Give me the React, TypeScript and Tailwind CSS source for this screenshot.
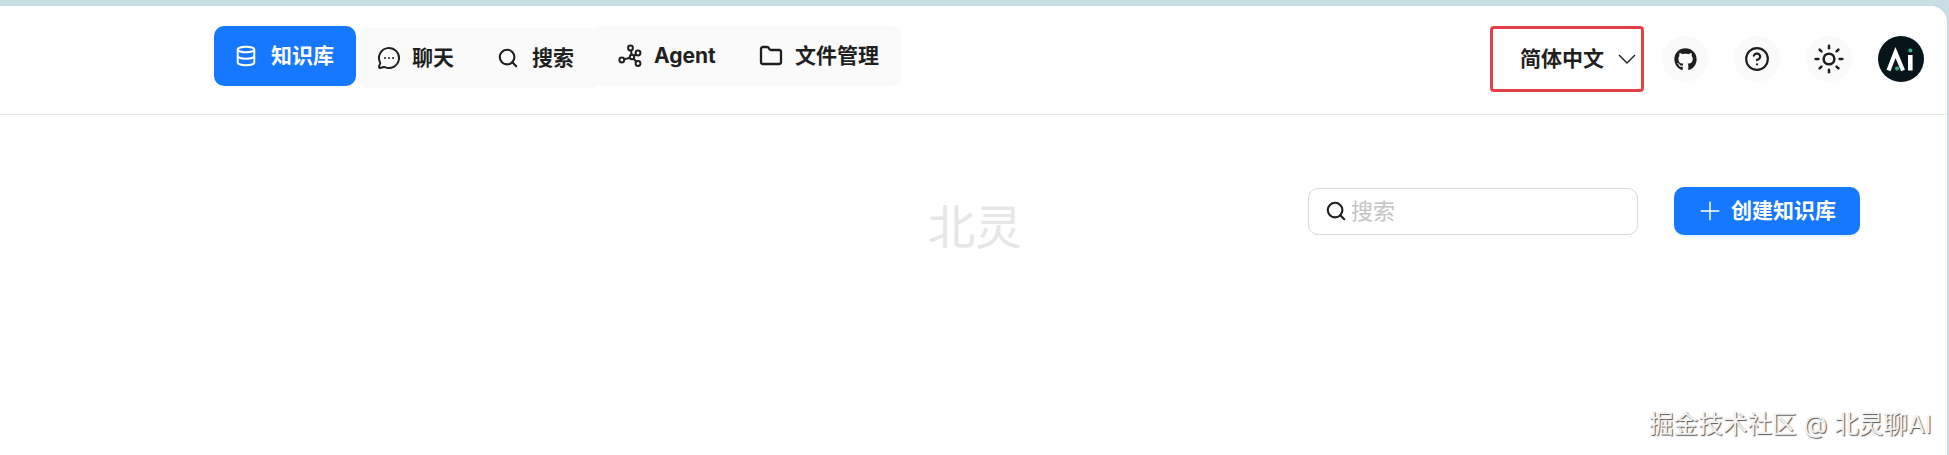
import { Database, Folder, HelpCircle, MessageCircleMore, Plus, Search, Sun } from 'lucide-react';
import { FaGithub } from 'react-icons/fa';
import type { ReactNode } from 'react';

const FONT = "font-['Inter','Noto_Sans_CJK_SC',sans-serif]";

function AgentIcon() {
    return (
        <svg width="24" height="24" viewBox="0 0 24 24" fill="none" stroke="currentColor" strokeWidth="2">
            <circle cx="12.5" cy="4" r="2.4" />
            <circle cx="3.8" cy="16" r="2.4" />
            <circle cx="20" cy="9" r="2.4" />
            <circle cx="20" cy="19.5" r="2.4" />
            <circle cx="14" cy="13" r="2.2" />
            <path d="M13 6.4l.6 4.4M6 15.4l6-1.7M16 12l1.8-1.6M15.6 14.8l2.8 3" />
        </svg>
    );
}

function NavItem({
    icon,
    label,
    active,
    className,
}: {
    icon: ReactNode;
    label: string;
    active?: boolean;
    className?: string;
}) {
    return (
        <div
            className={[
                'flex items-center h-[60px] text-[21px] font-bold',
                active ? 'bg-[#1677ff] text-white rounded-[10px]' : 'bg-[#fafafa] text-[#1f1f1f]',
                className ?? '',
            ].join(' ')}
        >
            {icon}
            <span>{label}</span>
        </div>
    );
}

function RoundIcon({ children }: { children: ReactNode }) {
    return (
        <div className="flex items-center justify-center w-[46px] h-[46px] rounded-full bg-[#fafafa] text-[#1f1f1f]">
            {children}
        </div>
    );
}

function AiLogo() {
    return (
        <svg width="46" height="46" viewBox="0 0 46 46" fill="none">
            <circle cx="23" cy="23" r="23" fill="#07151b" />
            <path d="M10.5 34.5L17.5 16.5L25 34.5" stroke="#fff" strokeWidth="4.2" />
            <rect x="30" y="19" width="4.6" height="15.5" fill="#fff" />
            <circle cx="32.4" cy="14.5" r="2" fill="#2fb98a" />
            <circle cx="19" cy="32.5" r="2" fill="#2fb98a" />
        </svg>
    );
}

export default function App() {
    return (
        <div className={`relative w-[1949px] h-[455px] overflow-hidden bg-[#c8dde4] pt-[6px] pr-[2px] ${FONT}`}>
            <div className="h-full bg-white rounded-tr-[16px]">
                <header className="flex items-start justify-between h-[109px] pt-[20px] pl-[214px] pr-[23px] border-b border-[#e5e7eb]">
                    <nav className="flex items-start">
                        <NavItem
                            active
                            className="w-[142px] mr-[2px] pl-[21px] gap-[14px]"
                            icon={<Database size={22} strokeWidth={2.2} />}
                            label="知识库"
                        />
                        <NavItem
                            className="w-[118px] mt-[2px] pl-[19px] gap-[11px] rounded-l-[10px]"
                            icon={<MessageCircleMore size={24} strokeWidth={2} />}
                            label="聊天"
                        />
                        <NavItem
                            className="w-[119px] mt-[2px] pl-[21px] gap-[13px]"
                            icon={<Search size={22} strokeWidth={2.3} />}
                            label="搜索"
                        />
                        <NavItem
                            className="w-[143px] pl-[23px] gap-[12px] rounded-tl-[4px]"
                            icon={<AgentIcon />}
                            label="Agent"
                        />
                        <NavItem
                            className="w-[163px] pl-[21px] gap-[12px] rounded-r-[10px]"
                            icon={<Folder size={24} strokeWidth={2.3} />}
                            label="文件管理"
                        />
                    </nav>
                    <div className="flex items-center gap-[18px]">
                        <div className="flex items-center justify-end gap-[14px] w-[154px] h-[66px] pr-[5px] border-[3px] border-[#e5404a] rounded-[4px] text-[21px] font-bold text-[#1f1f1f]">
                            <span>简体中文</span>
                            <svg width="18" height="10" viewBox="0 0 18 10" fill="none" stroke="currentColor" strokeWidth="1.4">
                                <path d="M1 1l8 8 8-8" />
                            </svg>
                        </div>
                        <div className="flex items-center gap-[26px]">
                            <RoundIcon>
                                <FaGithub size={23} />
                            </RoundIcon>
                            <RoundIcon>
                                <HelpCircle size={26} strokeWidth={2} />
                            </RoundIcon>
                            <RoundIcon>
                                <Sun size={32} strokeWidth={1.9} />
                            </RoundIcon>
                            <AiLogo />
                        </div>
                    </div>
                </header>
                <div className="flex items-center justify-end gap-9 pt-[72px] pr-[87px]">
                    <div className="flex items-center gap-1 w-[330px] h-[47px] px-4 border border-[#d9d9d9] rounded-[10px] bg-white text-[22px] text-[#c4c4c4]">
                        <Search size={22} strokeWidth={2.3} className="text-[#1f1f1f]" />
                        <span>搜索</span>
                    </div>
                    <div className="flex items-center gap-[6px] w-[186px] h-[48px] pl-[21px] rounded-[10px] bg-[#1677ff] text-white text-[21px] font-bold shadow-[0_2px_0_rgba(5,145,255,0.1)]">
                        <Plus size={30} strokeWidth={1.2} />
                        <span>创建知识库</span>
                    </div>
                </div>
            </div>
            {/* 水印 */}
            <div className="absolute left-[928px] top-[203px] text-[47px] leading-none text-[#e6e6e6]">北灵</div>
            <div className="absolute left-[1649px] top-[412px] text-[24.6px] leading-none text-[#f2f2f2] [text-shadow:1px_1px_1px_#555]">
                掘金技术社区 @ 北灵聊AI
            </div>
        </div>
    );
}
